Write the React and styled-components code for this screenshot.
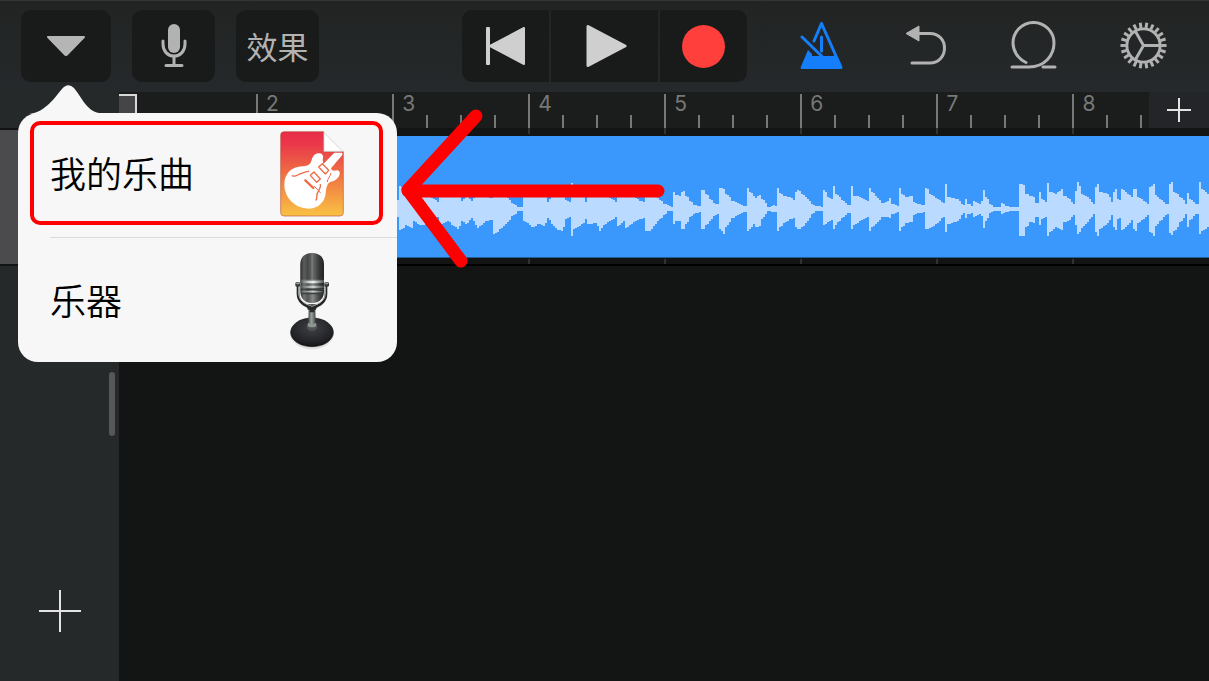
import React from 'react';
import styled, { createGlobalStyle } from 'styled-components';

const BEATS_PER_BAR = 4;
const BEATS = Array.from({ length: 31 }, (_, i) => i);

// [x, height above the axis, height below the axis]
const ENVELOPE = [
  [0, 10, 10],
  [278, 9, 8],
  [281, 23, 21],
  [287, 16, 16],
  [292, 18, 19],
  [294, 10, 12],
  [300, 16, 16],
  [305, 15, 16],
  [319, 7, 8],
  [321, 13, 15],
  [329, 12, 12],
  [333, 14, 16],
  [339, 18, 20],
  [342, 8, 12],
  [347, 13, 15],
  [352, 8, 9],
  [358, 18, 19],
  [367, 12, 12],
  [374, 10, 10],
  [375, 22, 25],
  [381, 18, 20],
  [388, 11, 13],
  [393, 6, 7],
  [399, 2, 2],
  [404, 2, 2],
  [405, 12, 12],
  [413, 17, 18],
  [419, 15, 15],
  [424, 16, 17],
  [429, 7, 9],
  [432, 15, 15],
  [438, 20, 21],
  [443, 20, 22],
  [446, 9, 10],
  [451, 7, 8],
  [452, 26, 27],
  [455, 18, 20],
  [463, 14, 15],
  [467, 7, 10],
  [469, 14, 15],
  [477, 12, 14],
  [480, 20, 22],
  [484, 15, 16],
  [489, 12, 13],
  [497, 7, 8],
  [499, 16, 17],
  [504, 12, 12],
  [507, 17, 19],
  [514, 12, 13],
  [521, 8, 10],
  [526, 7, 8],
  [527, 20, 22],
  [530, 20, 22],
  [538, 11, 12],
  [545, 5, 6],
  [548, 4, 2],
  [552, 2, 2],
  [554, 17, 15],
  [557, 14, 12],
  [561, 13, 12],
  [563, 17, 20],
  [566, 20, 20],
  [567, 13, 15],
  [571, 8, 8],
  [574, 4, 5],
  [581, 3, 3],
  [582, 19, 20],
  [585, 19, 20],
  [587, 15, 16],
  [591, 10, 12],
  [594, 6, 7],
  [600, 4, 4],
  [601, 21, 20],
  [604, 20, 25],
  [606, 15, 18],
  [610, 12, 13],
  [613, 8, 9],
  [617, 7, 7],
  [624, 3, 3],
  [628, 3, 3],
  [629, 21, 22],
  [631, 17, 20],
  [634, 13, 15],
  [636, 11, 18],
  [640, 14, 17],
  [643, 10, 10],
  [646, 6, 5],
  [649, 2, 2],
  [655, 4, 3],
  [658, 2, 2],
  [659, 21, 22],
  [661, 16, 18],
  [665, 13, 14],
  [670, 12, 10],
  [674, 9, 9],
  [676, 17, 18],
  [679, 19, 20],
  [683, 15, 18],
  [688, 10, 12],
  [693, 5, 5],
  [696, 3, 2],
  [704, 2, 2],
  [705, 19, 16],
  [708, 12, 13],
  [712, 10, 11],
  [714, 23, 20],
  [716, 15, 16],
  [719, 14, 13],
  [722, 9, 9],
  [729, 4, 4],
  [732, 3, 3],
  [733, 23, 20],
  [735, 13, 16],
  [741, 12, 12],
  [748, 8, 8],
  [750, 21, 22],
  [753, 17, 18],
  [758, 11, 13],
  [763, 6, 8],
  [768, 8, 8],
  [770, 11, 9],
  [773, 5, 5],
  [779, 3, 3],
  [780, 21, 22],
  [783, 15, 18],
  [787, 12, 14],
  [792, 13, 13],
  [795, 7, 6],
  [798, 5, 4],
  [806, 3, 3],
  [807, 21, 20],
  [811, 15, 19],
  [818, 10, 14],
  [823, 7, 9],
  [826, 5, 6],
  [827, 25, 23],
  [829, 12, 15],
  [838, 10, 12],
  [843, 5, 6],
  [845, 4, 4],
  [846, 10, 9],
  [849, 5, 5],
  [853, 3, 4],
  [855, 8, 8],
  [860, 5, 5],
  [864, 10, 9],
  [865, 19, 19],
  [867, 12, 12],
  [870, 5, 4],
  [875, 2, 2],
  [881, 2, 2],
  [883, 6, 5],
  [886, 3, 3],
  [890, 2, 2],
  [900, 2, 2],
  [901, 25, 27],
  [906, 23, 27],
  [907, 15, 18],
  [911, 13, 13],
  [915, 12, 14],
  [917, 6, 8],
  [920, 6, 8],
  [921, 17, 16],
  [923, 10, 10],
  [928, 5, 6],
  [929, 26, 27],
  [931, 17, 23],
  [936, 15, 18],
  [942, 20, 21],
  [945, 13, 13],
  [949, 11, 12],
  [954, 5, 6],
  [956, 18, 16],
  [959, 27, 25],
  [962, 15, 19],
  [968, 12, 13],
  [974, 5, 5],
  [976, 22, 23],
  [979, 25, 27],
  [981, 17, 20],
  [988, 15, 14],
  [993, 7, 6],
  [995, 17, 18],
  [997, 20, 21],
  [999, 10, 10],
  [1002, 6, 8],
  [1003, 20, 21],
  [1008, 15, 16],
  [1012, 12, 11],
  [1014, 20, 20],
  [1017, 20, 22],
  [1019, 12, 14],
  [1028, 5, 6],
  [1030, 5, 5],
  [1031, 22, 23],
  [1034, 25, 27],
  [1036, 14, 17],
  [1041, 10, 12],
  [1046, 5, 6],
  [1049, 5, 5],
  [1050, 25, 24],
  [1053, 27, 26],
  [1055, 17, 22],
  [1061, 12, 13],
  [1067, 5, 5],
  [1069, 16, 18],
  [1071, 10, 11],
  [1076, 5, 5],
  [1079, 5, 5],
  [1080, 27, 25],
  [1083, 20, 22],
  [1090, 13, 17],
];

const WAVE_WIDTH = 1090;
const WAVE_AXIS = 73;

// samples the envelope every two units into a stepped outline
const buildWave = () => {
  const top = [];
  const bottom = [];
  let k = 0;
  for (let x = 1; x < WAVE_WIDTH; x += 2) {
    while (ENVELOPE[k + 1][0] <= x) k += 1;
    const [x0, u0, d0] = ENVELOPE[k];
    const [x1, u1, d1] = ENVELOPE[k + 1];
    const t = Math.max(0, (x - 1 - x0) / (x1 - x0));
    const up = Math.round(u0 + (u1 - u0) * t);
    const down = Math.round(d0 + (d1 - d0) * t);
    top.push(`${x - 1},${WAVE_AXIS - up} ${x + 1},${WAVE_AXIS - up}`);
    bottom.unshift(`${x + 1},${WAVE_AXIS + down} ${x - 1},${WAVE_AXIS + down}`);
  }
  return [...top, ...bottom].join(' ');
};

const WAVE_POINTS = buildWave();

const CaretIcon = () => (
  <svg width="40" height="22" viewBox="0 0 40 22" aria-hidden="true">
    <path
      d="M2 3H38L21 20.500Q20 21.500 19 20.500Z"
      fill="#b5b5b5"
      stroke="#b5b5b5"
      strokeWidth="2"
      strokeLinejoin="round"
    />
  </svg>
);

const MicIcon = () => (
  <svg width="26" height="44" viewBox="0 0 26 44" aria-hidden="true">
    <rect x="7" y="1" width="12" height="29" rx="6" fill="#b2b2b2" />
    <path
      d="M2 18V21C2 28 6.500 33 13 33S24 28 24 21V18M13 33V42M5 42.500H21"
      fill="none"
      stroke="#b2b2b2"
      strokeWidth="3"
      strokeLinecap="round"
    />
  </svg>
);

const RewindIcon = () => (
  <svg width="40" height="40" viewBox="0 0 40 40" aria-hidden="true">
    <rect x="0" y="1" width="4" height="38" rx="1" fill="#cfcfcf" />
    <path
      d="M38 2V38L4 20Z"
      fill="#cfcfcf"
      stroke="#cfcfcf"
      strokeWidth="2"
      strokeLinejoin="round"
    />
  </svg>
);

const PlayIcon = () => (
  <svg width="44" height="44" viewBox="0 0 44 44" aria-hidden="true">
    <path
      d="M5 2.500V41.500L42 22Z"
      fill="#cfcfcf"
      stroke="#cfcfcf"
      strokeWidth="3"
      strokeLinejoin="round"
    />
  </svg>
);

const MetronomeIcon = () => (
  <svg width="43" height="48" viewBox="0 0 43 48" aria-hidden="true">
    <g fill="none" stroke="#147efb" strokeWidth="3" strokeLinecap="round">
      <path d="M14 20L21.500 2.500L40 44" strokeLinejoin="round" />
      <path d="M2 16L22 35.500" />
      <path d="M21.500 16V30" />
    </g>
    <path
      d="M8 29L12 33V35H33L36 33.500L42.500 46Q43 48 41 48H2Q0 48 1 45.500Z"
      fill="#147efb"
    />
  </svg>
);

const UndoIcon = () => (
  <svg width="43" height="42" viewBox="0 0 43 42" aria-hidden="true">
    <path
      d="M14 9.500H25C34 9.500 39.500 16 39.500 24S34 39 25 39H7"
      fill="none"
      stroke="#b2b2b2"
      strokeWidth="3"
      strokeLinecap="round"
    />
    <path
      d="M1 9.500L14 2V17Z"
      fill="#b2b2b2"
      stroke="#b2b2b2"
      strokeWidth="1"
      strokeLinejoin="round"
    />
  </svg>
);

const LoopIcon = () => (
  <svg width="48" height="48" viewBox="0 0 48 48" aria-hidden="true">
    <g fill="none" stroke="#b2b2b2" strokeWidth="3" strokeLinecap="round">
      <path d="M2 46H19C35 46 44 34 44 22A20.500 20.500 0 1 0 3 22C3 30 8 38 16 41.500" />
      <path d="M33 46H45" />
    </g>
  </svg>
);

const GearIcon = () => (
  <svg width="47" height="47" viewBox="-24 -24 48 48" aria-hidden="true">
    <g fill="none" stroke="#b2b2b2">
      <circle r="17" strokeWidth="3" />
      <path d="M0 0H17M0 0L-8.500 -14.700M0 0L-8.500 14.700" strokeWidth="3" />
      {Array.from({ length: 22 }, (_, i) => (
        <path key={i} d="M18 0H23.500" strokeWidth="3" transform={`rotate(${(i * 360) / 22})`} />
      ))}
    </g>
  </svg>
);

const PlusIcon = ({ size }) => (
  <svg width={size} height={size} viewBox={`0 0 ${size} ${size}`} aria-hidden="true">
    <path
      d={`M0 ${size / 2}H${size}M${size / 2} 0V${size}`}
      stroke="#e3e3e3"
      strokeWidth="2"
    />
  </svg>
);

const SongFileIcon = () => (
  <svg width="64" height="86" viewBox="0 0 192 258" aria-hidden="true">
    <defs>
      <linearGradient id="songPaper" x1="0" y1="0" x2="0" y2="1">
        <stop offset="0" stopColor="#e72d49" />
        <stop offset="0.15" stopColor="#ea384a" />
        <stop offset="0.500" stopColor="#ef7043" />
        <stop offset="1" stopColor="#f9c244" />
      </linearGradient>
    </defs>
    <path
      d="M12 2H131V62H190V244Q190 255 180 255H12Q2 255 2 244V12Q2 2 12 2Z"
      fill="url(#songPaper)"
      stroke="#b8503a"
      strokeOpacity="0.600"
      strokeWidth="3"
    />
    <path d="M132 5L188 61H132Z" fill="#ffffff" stroke="#c4c4c4" strokeWidth="2" />
    <path
      d="M163 65H187V72L153 112C156 122 164 119 171 118C180 119 182 128 176 137C170 147 161 150 152 152C142 156 138 170 137 187C135 212 115 233 88 233C45 233 13 201 13 160C13 128 35 107 67 106C84 105 91 101 95 87C99 72 108 66 118 67C130 69 131 77 128 87L130 99Z"
      fill="#ffffff"
    />
    <g fill="none" stroke="#ee6c43" strokeWidth="4" strokeLinejoin="round" strokeLinecap="round">
      <path d="M116 108L127 98L146 118L136 129Z" />
      <path d="M91 133L102 123L121 144L110 154Z" />
      <path d="M76 148L100 171" strokeWidth="7" />
      <path d="M37 134C45 140 53 130 65 127C74 123 81 121 86 121" />
      <path d="M108 207C114 199 107 192 114 183C119 174 123 167 121 161" />
      <path d="M103 166L121 185M142 152C142 142 151 137 153 127" strokeWidth="3" />
    </g>
  </svg>
);

const StudioMicIcon = () => (
  <svg width="46" height="98" viewBox="0 0 138 294" aria-hidden="true">
    <defs>
      <linearGradient id="micHead" x1="0" y1="0" x2="1" y2="0">
        <stop offset="0" stopColor="#303332" />
        <stop offset="0.150" stopColor="#707573" />
        <stop offset="0.320" stopColor="#525654" />
        <stop offset="0.520" stopColor="#858988" />
        <stop offset="0.800" stopColor="#414443" />
        <stop offset="1" stopColor="#232525" />
      </linearGradient>
      <linearGradient id="micBand" x1="0" y1="0" x2="1" y2="0">
        <stop offset="0" stopColor="#4f5452" />
        <stop offset="0.350" stopColor="#cbd0cd" />
        <stop offset="0.550" stopColor="#f0f2f0" />
        <stop offset="1" stopColor="#4b4f4d" />
      </linearGradient>
      <linearGradient id="micStem" x1="0" y1="0" x2="1" y2="0">
        <stop offset="0" stopColor="#4a504e" />
        <stop offset="0.450" stopColor="#9ba19f" />
        <stop offset="1" stopColor="#3f4443" />
      </linearGradient>
      <radialGradient id="micBase" cx="0.500" cy="0.350" r="0.700">
        <stop offset="0" stopColor="#3f4146" />
        <stop offset="0.700" stopColor="#222327" />
        <stop offset="1" stopColor="#0d0d0e" />
      </radialGradient>
      <pattern id="micMesh" width="5" height="5" patternUnits="userSpaceOnUse">
        <path d="M0 0L5 5M5 0L0 5" stroke="#181a19" strokeWidth="1" />
      </pattern>
    </defs>
    <ellipse cx="69" cy="246" rx="65" ry="46" fill="#c9c9c9" opacity="0.500" />
    <ellipse cx="69" cy="241" rx="64" ry="43" fill="url(#micBase)" stroke="#161617" strokeWidth="2" />
    <ellipse cx="69" cy="224" rx="16" ry="12" fill="#4f5453" />
    <ellipse cx="69" cy="218" rx="13" ry="8" fill="#8d9492" />
    <path d="M59 168H79L80 213Q69 220 58 213Z" fill="url(#micStem)" />
    <path d="M53 157H85L81 173H76V181H62V173H56Z" fill="#292c2b" />
    <path
      d="M27 101V125C27 150 46 160 69 169C92 160 111 150 111 125V101"
      fill="none"
      stroke="#262928"
      strokeWidth="8"
    />
    <path d="M34 38C34 14 49 3 69 3S105 14 105 38V118C105 140 91 153 69 153S34 140 34 118Z" fill="url(#micHead)" />
    <path d="M34 38C34 14 49 3 69 3S105 14 105 38V82H34Z" fill="url(#micMesh)" opacity="0.650" />
    <path d="M69 7V80" stroke="#a3a7a5" strokeWidth="3" opacity="0.400" />
    <path
      d="M29 101V123C29 146 47 155 69 163C91 155 109 146 109 123V101"
      fill="none"
      stroke="#a9aeac"
      strokeWidth="3"
    />
    <path d="M34 84Q69 88 105 84V92Q69 96 34 92Z" fill="url(#micBand)" />
    <path d="M35 101H105V108H35ZM36 117H103V121H37Z" fill="url(#micBand)" opacity="0.700" />
    <path d="M35 112H105M38 125H101" stroke="#3c4140" strokeWidth="4" />
    <rect x="19" y="91" width="14" height="13" rx="4" fill="#363b39" />
    <rect x="106" y="91" width="14" height="13" rx="4" fill="#363b39" />
    <path d="M22 95H31M109 95H117" stroke="#bac0bc" strokeWidth="3" />
  </svg>
);

const beatFlex = i => (i === BEATS.length - 1 ? 20 : 100);

const App = () => {
  return (
    <Screen>
      <GlobalStyle />
      <Toolbar>
        <LeftGroup>
          <MenuAnchor>
            <ToolButton $wide type="button" aria-label="浏览器" aria-expanded="true">
              <CaretIcon />
            </ToolButton>
            <Popover>
              <PopoverTip width="78" height="30" viewBox="0 0 78 30" aria-hidden="true">
                <path
                  d="M0 30C17 28 26 13 33 5Q39 -2 45 4C53 14 58 27 70 29L78 30Z"
                  fill="#f7f7f7"
                />
              </PopoverTip>
              <MenuItem $marked type="button">
                <MenuText>我的乐曲</MenuText>
                <IconSlot>
                  <SongFileIcon />
                </IconSlot>
              </MenuItem>
              <Separator />
              <MenuItem type="button">
                <MenuText>乐器</MenuText>
                <IconSlot>
                  <StudioMicIcon />
                </IconSlot>
              </MenuItem>
            </Popover>
          </MenuAnchor>
          <ToolButton type="button" aria-label="麦克风">
            <MicIcon />
          </ToolButton>
          <ToolButton type="button">效果</ToolButton>
        </LeftGroup>
        <Transport>
          <TransportButton type="button" aria-label="回到开头">
            <RewindIcon />
          </TransportButton>
          <TransportButton $wide type="button" aria-label="播放">
            <PlayIcon />
          </TransportButton>
          <TransportButton type="button" aria-label="录音">
            <RecordDot />
          </TransportButton>
        </Transport>
        <RightGroup>
          <IconButton type="button" aria-label="节拍器">
            <MetronomeIcon />
          </IconButton>
          <IconButton type="button" aria-label="撤销">
            <UndoIcon />
          </IconButton>
          <IconButton type="button" aria-label="循环乐段">
            <LoopIcon />
          </IconButton>
          <IconButton type="button" aria-label="设置">
            <GearIcon />
          </IconButton>
        </RightGroup>
      </Toolbar>

      <Workspace>
        <Sidebar>
          <TrackHeader />
          <ScrollThumb />
          <AddTrackButton type="button" aria-label="添加轨道">
            <PlusIcon size={42} />
          </AddTrackButton>
        </Sidebar>
        <Timeline>
          <RulerRow>
            <Ruler>
              {BEATS.map(i => (
                <Beat key={i} $grow={beatFlex(i)} $major={i > 0 && i % BEATS_PER_BAR === 0}>
                  {i % BEATS_PER_BAR === 0 && (
                    <BarNumber>{i / BEATS_PER_BAR + 1}</BarNumber>
                  )}
                </Beat>
              ))}
              <CycleMarker />
            </Ruler>
            <AddSectionButton type="button" aria-label="添加段落">
              <PlusIcon size={24} />
            </AddSectionButton>
          </RulerRow>
          <GridTicks>
            {BEATS.map(i => (
              <GridTick key={i} $grow={beatFlex(i)} $shown={i % BEATS_PER_BAR === 0} />
            ))}
          </GridTicks>
          <Clip>
            <Wave viewBox={`0 0 ${WAVE_WIDTH} 121`} preserveAspectRatio="none" aria-hidden="true">
              <polygon points={WAVE_POINTS} fill="#badbff" />
            </Wave>
          </Clip>
          <GridTicks $bottom>
            {BEATS.map(i => (
              <GridTick key={i} $grow={beatFlex(i)} $shown={i % BEATS_PER_BAR === 0} />
            ))}
          </GridTicks>
        </Timeline>
      </Workspace>

      <Pointer width="272" height="164" viewBox="0 0 272 164" aria-hidden="true">
        <path
          d="M81 10L13 84L66 155M13 85H263"
          fill="none"
          stroke="#ff0000"
          strokeWidth="13"
          strokeLinecap="round"
          strokeLinejoin="round"
        />
      </Pointer>
    </Screen>
  );
};

const GlobalStyle = createGlobalStyle`
  * {
    box-sizing: border-box;
  }

  body {
    margin: 0;
    background-color: #121514;
    font-family: 'Liberation Sans', 'Noto Sans CJK SC', sans-serif;
  }

  button {
    padding: 0;
    border: none;
    background: none;
    font-family: inherit;
    cursor: pointer;
  }

  svg {
    display: block;
  }
`;

const Screen = styled.div`
  position: relative;
  display: flex;
  flex-direction: column;
  min-height: 100vh;
  overflow: hidden;
`;

const Toolbar = styled.header`
  display: grid;
  grid-template-columns: 1fr auto 1fr;
  align-items: center;
  height: 92px;
  padding-bottom: 1px;
  border-top: 1px solid #343636;
  background: linear-gradient(#222423, #25292b);
`;

const LeftGroup = styled.div`
  display: flex;
  gap: 21px;
  padding-left: 21px;
`;

const MenuAnchor = styled.div`
  position: relative;
`;

const ToolButton = styled.button`
  display: flex;
  justify-content: center;
  align-items: center;
  width: ${({ $wide }) => ($wide ? 90 : 83)}px;
  height: 72px;
  padding-bottom: 2px;
  border-radius: 10px;
  background-color: #191a1a;
  color: #b2b2b2;
  font-size: 31px;
`;

const Popover = styled.div`
  position: absolute;
  top: calc(100% + 31px);
  left: -3px;
  z-index: 2;
  width: 379px;
  border-radius: 20px;
  background-color: #f7f7f7;
`;

const PopoverTip = styled.svg`
  position: absolute;
  bottom: calc(100% - 1px);
  left: 11px;
`;

const MenuItem = styled.button`
  display: flex;
  justify-content: space-between;
  align-items: center;
  width: ${({ $marked }) => ($marked ? '353px' : '100%')};
  height: ${({ $marked }) => ($marked ? 104 : 124)}px;
  margin: ${({ $marked }) => ($marked ? '8px 12px 12px' : 0)};
  padding: ${({ $marked }) => ($marked ? '0 14px 0 16px' : '0 32px')};
  border: ${({ $marked }) => ($marked ? '4px solid #ff0000' : 'none')};
  border-radius: 10px;
  color: #000000;
  font-size: 36px;
`;

const MenuText = styled.span`
  padding-bottom: 3px;
  font-weight: 350;
`;

const IconSlot = styled.span`
  display: flex;
  justify-content: center;
  width: 106px;
  padding-top: 2px;
`;

const Separator = styled.div`
  height: 1px;
  margin-left: 32px;
  background-color: #dcdcdc;
`;

const Transport = styled.div`
  display: flex;
  gap: 2px;
  border-radius: 10px;
  overflow: hidden;
`;

const TransportButton = styled.button`
  display: flex;
  justify-content: center;
  align-items: center;
  width: ${({ $wide }) => ($wide ? 107 : 87)}px;
  height: 72px;
  background-color: #191a1a;
`;

const RecordDot = styled.span`
  width: 43px;
  height: 43px;
  border-radius: 50%;
  background-color: #ff3f3b;
`;

const RightGroup = styled.div`
  display: flex;
  justify-content: flex-end;
  align-items: center;
  gap: 62px;
  padding: 0 42px 2px 0;
`;

const IconButton = styled.button`
  display: flex;
`;

const Workspace = styled.main`
  display: flex;
  flex: 1;
`;

const Sidebar = styled.aside`
  display: flex;
  flex-direction: column;
  width: 119px;
  padding: 36px 0 49px;
  background-color: #25292a;
`;

const TrackHeader = styled.div`
  height: 138px;
  border-top: 2px solid #121313;
  border-bottom: 2px solid #121313;
  background-color: #4b4b4d;
`;

const ScrollThumb = styled.div`
  align-self: flex-end;
  width: 6px;
  height: 64px;
  margin: 106px 4px 0 0;
  border-radius: 3px;
  background-color: #57575a;
`;

const AddTrackButton = styled.button`
  align-self: center;
  margin-top: auto;
`;

const Timeline = styled.section`
  flex: 1;
  min-width: 0;
  background-color: #121514;
`;

const RulerRow = styled.div`
  display: flex;
  height: 36px;
`;

const Ruler = styled.div`
  position: relative;
  display: flex;
  flex: 1;
  align-items: flex-end;
  padding-left: 1px;
  background-color: #1b1d1c;
`;

const Beat = styled.div`
  flex: ${({ $grow }) => $grow} 1 0;
  min-width: 0;
  height: ${({ $major }) => ($major ? 34 : 13)}px;
  border-left: 2px solid #767877;
`;

const BarNumber = styled.span`
  display: block;
  padding-left: 8px;
  color: #767877;
  font-family: Inter, 'Liberation Sans', sans-serif;
  font-size: 21px;
  line-height: 20px;
`;

const CycleMarker = styled.div`
  position: absolute;
  top: 2px;
  left: 0;
  width: 18px;
  height: 20px;
  border-top: 2px solid #d8d8d8;
  border-right: 2px solid #d8d8d8;
  background-color: #454547;
`;

const AddSectionButton = styled.button`
  display: flex;
  justify-content: center;
  align-items: center;
  width: 60px;
  background-color: #242528;
`;

const GridTicks = styled.div`
  display: flex;
  height: 8px;
  padding: ${({ $bottom }) => ($bottom ? '1px 60px 0 1px' : '0 60px 2px 1px')};
  border-bottom: ${({ $bottom }) => ($bottom ? '2px solid #000000' : 'none')};
`;

const GridTick = styled.div`
  flex: ${({ $grow }) => $grow} 1 0;
  border-left: 2px solid ${({ $shown }) => ($shown ? '#303332' : 'transparent')};
`;

const Clip = styled.div`
  height: 122px;
  border-bottom: 1px solid #1f5f9f;
  background-color: #3a98fc;
`;

const Wave = styled.svg`
  width: 100%;
  height: 121px;
`;

const Pointer = styled.svg`
  position: absolute;
  top: 106px;
  left: 395px;
  z-index: 3;
`;

export default App;
